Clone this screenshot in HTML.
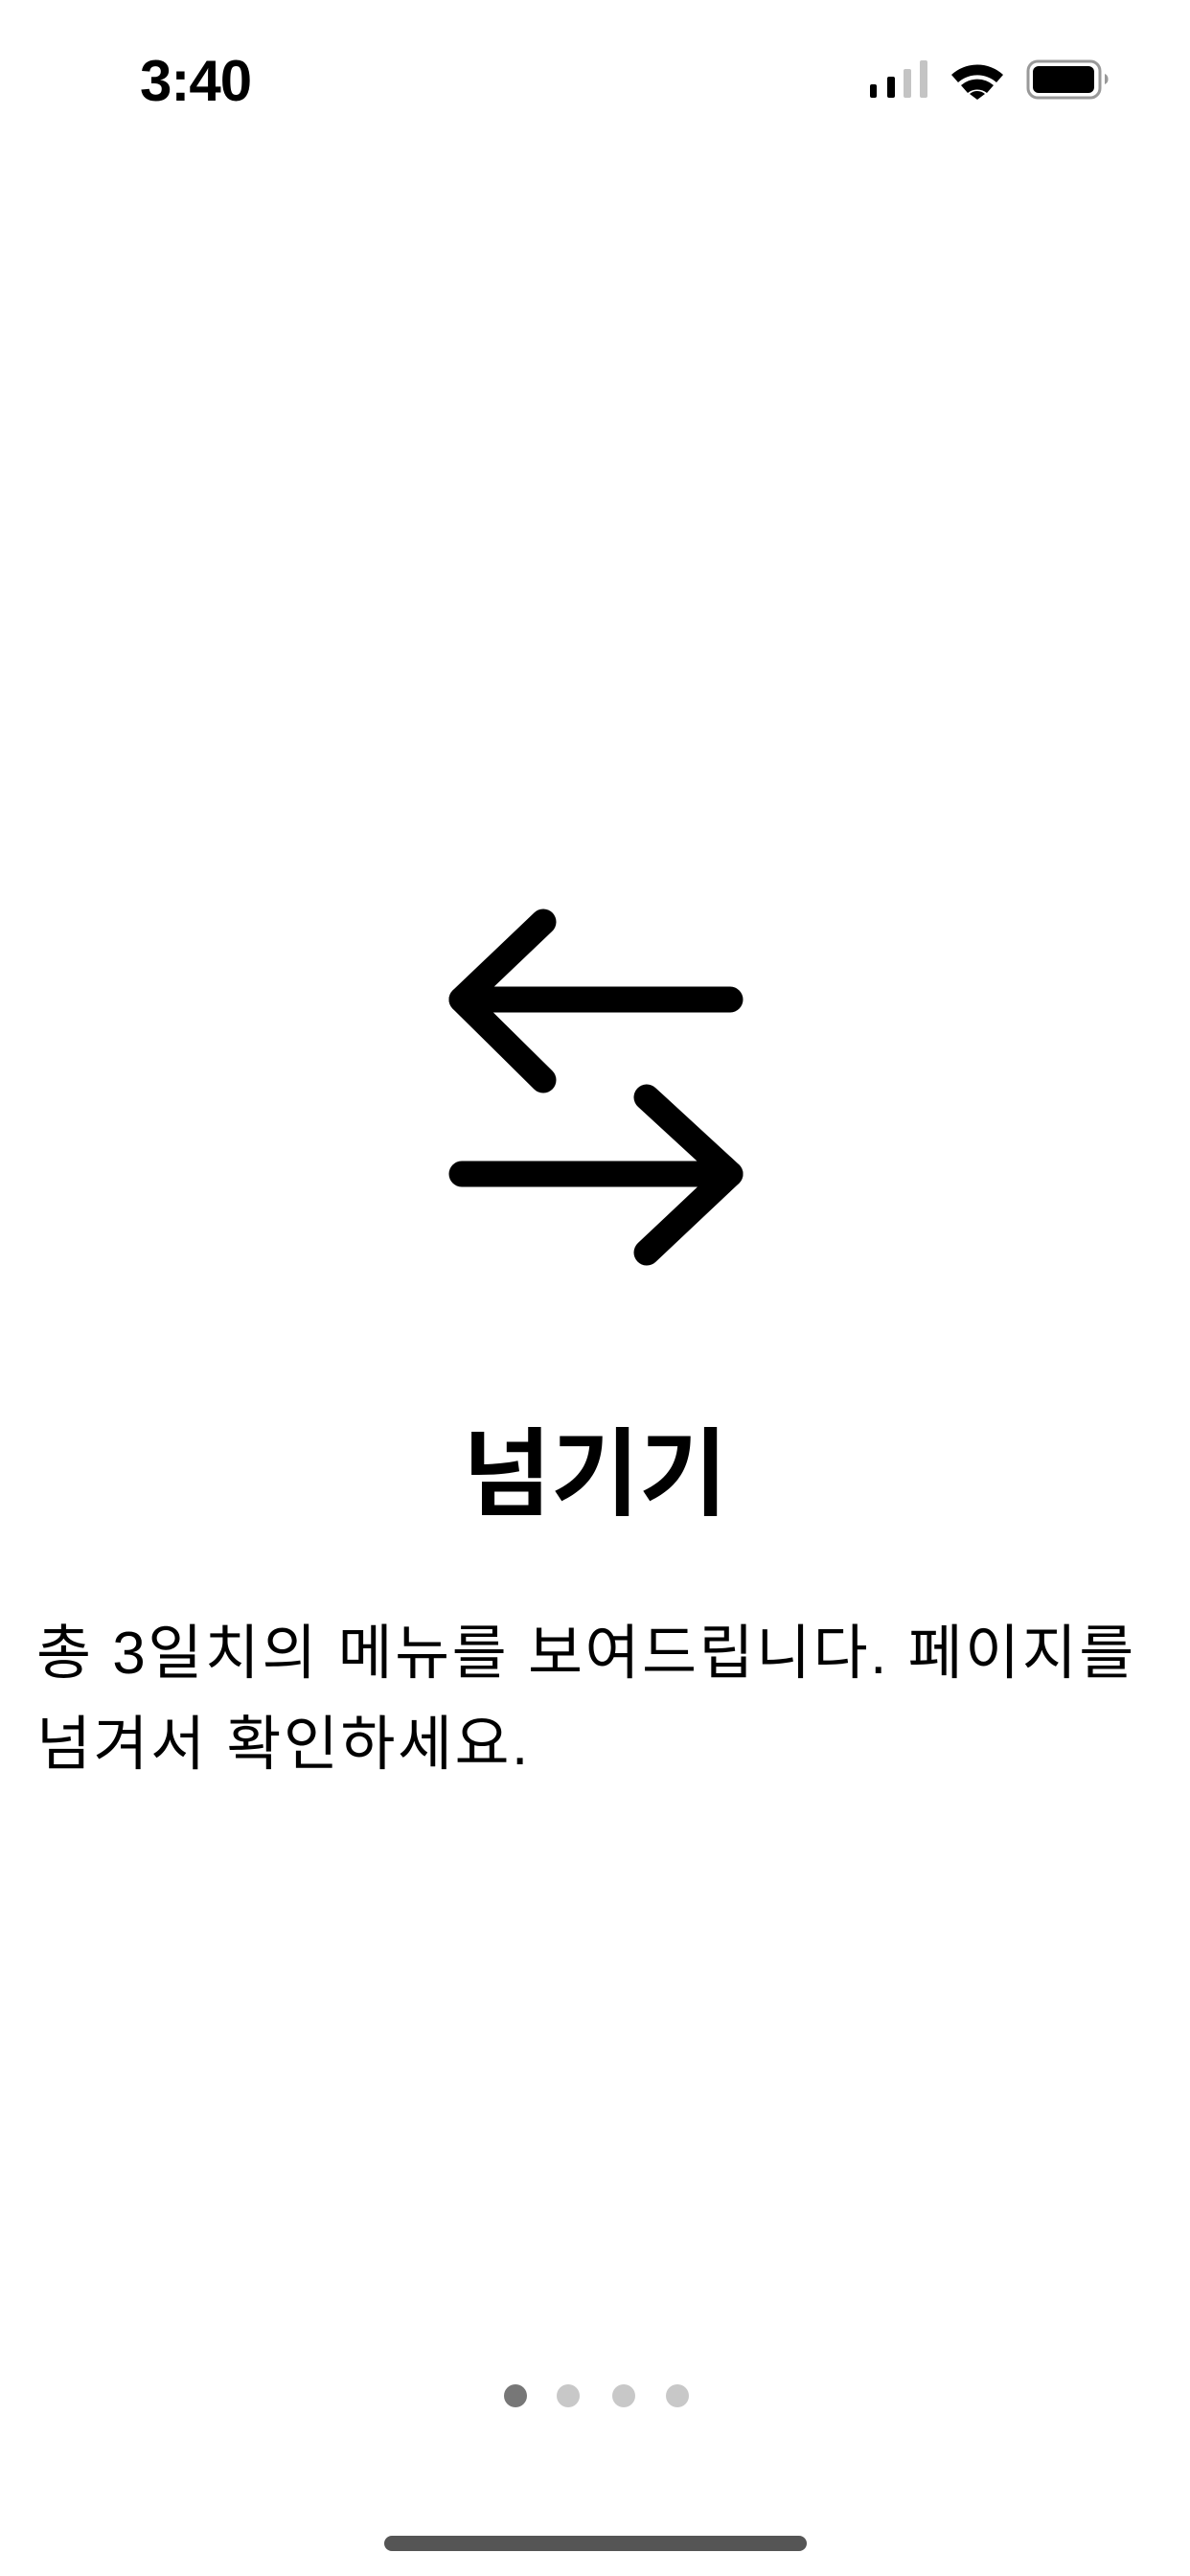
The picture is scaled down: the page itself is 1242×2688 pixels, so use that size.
<!DOCTYPE html>
<html><head><meta charset="utf-8">
<style>
html,body{margin:0;padding:0;background:#fff;}
body{width:1242px;height:2688px;position:relative;overflow:hidden;font-family:"Liberation Sans","Noto Sans CJK KR",sans-serif;color:#000;}
.time{position:absolute;left:146px;top:50px;font-size:60px;font-weight:bold;letter-spacing:-1px;line-height:70px;}
.title{position:absolute;left:0;width:1242px;top:1470px;text-align:center;font-size:100px;font-weight:bold;line-height:120px;font-family:"Noto Sans CJK KR",sans-serif;}
.body{position:absolute;left:38px;top:1678px;font-size:62px;letter-spacing:2.5px;line-height:95px;white-space:nowrap;font-family:"Liberation Sans","Noto Sans CJK KR",sans-serif;}
.dot{position:absolute;top:2488px;width:24px;height:24px;border-radius:50%;background:#c8c8c8;}
.bar{position:absolute;left:401px;top:2646px;width:441px;height:16px;border-radius:8px;background:#555;}
</style></head><body>
<div class="time">3:40</div>
<svg style="position:absolute;left:0;top:0" width="1242" height="130">
  <rect x="908" y="88" width="7" height="14" rx="2" fill="#000"/>
  <rect x="926" y="80" width="8" height="22" rx="2" fill="#000"/>
  <rect x="943" y="72" width="8" height="30" rx="2" fill="#c4c4c4"/>
  <rect x="960" y="63" width="8" height="39" rx="2" fill="#c4c4c4"/>
  <path d="M993 78 A40 40 0 0 1 1047 78 L1040 86 A30 30 0 0 0 1000 86 Z" fill="#000"/>
  <path d="M1003 89 A26 26 0 0 1 1037 89 L1030 97 A16 16 0 0 0 1010 97 Z" fill="#000"/>
  <path d="M1020 104 L1012 98 A12 12 0 0 1 1028 98 Z" fill="#000"/>
  <rect x="1073" y="64" width="75" height="38" rx="10" fill="none" stroke="#999" stroke-width="3"/>
  <rect x="1078" y="69" width="64" height="28" rx="6" fill="#000"/>
  <path d="M1153 77 A6 6 0 0 1 1153 88 Z" fill="#999"/>
</svg>
<svg style="position:absolute;left:0;top:0" width="1242" height="1400">
  <g fill="none" stroke="#000" stroke-width="27" stroke-linecap="round" stroke-linejoin="round">
    <path d="M762 1043 H482"/>
    <path d="M567 962 L482 1043 L567 1127"/>
    <path d="M482 1225 H762"/>
    <path d="M675 1145 L762 1225 L675 1307"/>
  </g>
</svg>
<div class="title">넘기기</div>
<div class="body">총 3일치의 메뉴를 보여드립니다. 페이지를<br>넘겨서 확인하세요.</div>
<div class="dot" style="left:526px;background:#777"></div>
<div class="dot" style="left:581px"></div>
<div class="dot" style="left:639px"></div>
<div class="dot" style="left:695px"></div>
<div class="bar"></div>
</body></html>
